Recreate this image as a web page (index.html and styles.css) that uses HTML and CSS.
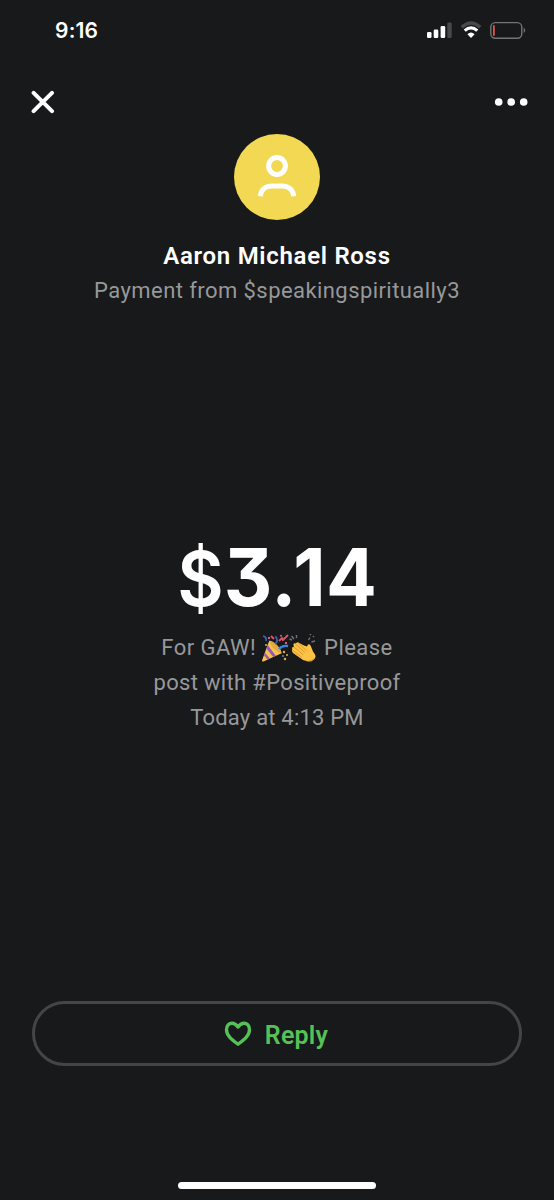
FILE: index.html
```html
<!DOCTYPE html>
<html lang="en">
<head>
<meta charset="utf-8">
<title>Payment</title>
<link rel="stylesheet" href="styles.css">
</head>
<body>
<main class="screen">
  <header class="status">
    <span class="clock">9:16</span>
    <svg class="indicators" width="100" height="20" viewBox="0 0 100 20">
      <g fill="#fff"><rect x="1" y="12" width="4.5" height="6" rx="1.3"/><rect x="7.7" y="9.5" width="4.6" height="8.5" rx="1.3"/><rect x="14.6" y="6" width="4.6" height="12" rx="1.3"/></g>
      <rect x="21.3" y="2.5" width="4.4" height="15.5" rx="1.3" fill="#48494a"/>
      <path d="M35.7 7.2Q45 -1.2 54.3 7.2" fill="none" stroke="#48494a" stroke-width="3.4"/>
      <path d="M38.7 10.6Q45 5 51.3 10.6" fill="none" stroke="#fff" stroke-width="3.2"/>
      <path d="M41.4 14.2Q45 11 48.6 14.2L45 17.9Z" fill="#fff"/>
      <rect x="64.8" y="2.6" width="31" height="15.6" rx="4.5" fill="none" stroke="#737475" stroke-width="1.4"/>
      <rect x="67" y="5" width="1.8" height="11" rx=".9" fill="#e9514b"/>
      <path d="M97.7 7.8Q99.2 8.5 99.2 10.4T97.7 13Z" fill="#737475"/>
    </svg>
  </header>
  <nav class="toolbar">
    <svg width="24" height="24" viewBox="0 0 24 24"><path d="M2.6 2.8 21 21.2M21 2.8 2.6 21.2" stroke="#fff" stroke-width="4" stroke-linecap="round"/></svg>
    <svg width="34" height="10" viewBox="0 0 34 10" fill="#fff"><circle cx="4.7" cy="5" r="3.8"/><circle cx="17.2" cy="5" r="3.8"/><circle cx="29.7" cy="5" r="3.8"/></svg>
  </nav>
  <section class="profile">
    <svg width="86" height="86" viewBox="0 0 86 86"><circle cx="43" cy="43" r="43" fill="#f2d853"/><g fill="none" stroke="#fff" stroke-width="5"><circle cx="43" cy="32" r="8.4"/><path d="M26.2 62.3C27 55 32 51.9 38 51.9H48C54 51.9 59 55 59.8 62.3"/></g></svg>
    <h1 class="name">Aaron Michael Ross</h1>
    <p class="source">Payment from $speakingspiritually3</p>
  </section>
  <section class="payment">
    <div class="amount"><span class="dollar">$</span>3<span class="point">.</span><span class="one">1</span>4</div>
    <p class="note line-one"><span>For GAW!</span>
      <svg class="emoji" width="56" height="28" viewBox="0 0 56 28">
        <path d="M1 26.5 8.2 6.8Q18 10.5 20.6 19.2L3 27.2Q1 28 1 26.5Z" fill="#f5c34f"/>
        <path d="M6.7 11 14.8 21.8 12.2 23 5.4 14.6ZM3.9 18.7 8.9 24.5 6.5 25.6 3 21.2Z" fill="#9b55b8"/>
        <path d="M8.2 6.8C12 6 20 13.5 20.6 19.2C16 18.5 9.5 13 8.2 6.8Z" fill="#e3aa40"/>
        <path d="M18 15Q21 11 27 12" fill="none" stroke="#3d86df" stroke-width="2.3"/>
        <path d="M14 10Q18 7 14.5 2.3M2 2Q6 3 5 7" fill="none" stroke="#3767bd" stroke-width="1.7"/>
        <path d="M10 2 13 5M18 7 21 4 22 6 25 3 27 1" fill="none" stroke="#df526a" stroke-width="1.8"/>
        <g fill="#e65d72"><rect x="7" y="3" width="2" height="2"/><rect x="24" y="8" width="2" height="2"/><circle cx="20" cy="1.7" r="1"/></g>
        <g fill="#ddb345"><circle cx="23" cy="18" r="1.2"/><circle cx="26" cy="21" r="1"/><circle cx="24" cy="25" r="1.2"/><circle cx="5" cy="11" r="1"/></g>
        <circle cx="22" cy="22" r=".9" fill="#708ee0"/>
        <path d="M31.2 15Q30.5 12.5 33 13L32.4 10.5Q32.8 8.5 34.6 9.5L36 8.6Q37 7.6 38.2 9L43 11.5 46 12.6 47 10.5Q49 9.8 50 12.5L52 17.5 54 20.5Q55.5 24 52.5 25.6Q48 28.5 42 26L32.7 19.6Q30.4 18 31.2 15Z" fill="#fcc345"/>
        <path d="M34.7 10.2 43.6 18.3M33 13.1 42 20.6M32 16.5 40.4 23M37.3 9.1 45 16.3" fill="none" stroke="#d99328" stroke-width=".9" stroke-linecap="round"/>
        <path d="M41.5 25.8Q49 28.5 54.2 23.2Q52 28.6 46.5 27.4Z" fill="#df9d2d"/>
        <path d="M30.5 2 33 5M35.5 1V4M31 6 28.5 5M47.5 6 49 3.5M50.5 8 54 7M48.8 1 50 0M52 3 53 2" fill="none" stroke="#6e747a" stroke-width="1.4"/>
      </svg>
      <span>Please</span></p>
    <p class="note line-two">post with #Positiveproof</p>
    <p class="note line-three">Today at 4:13 PM</p>
  </section>
  <button class="reply" type="button">
    <svg width="28" height="26" viewBox="0 0 28 26"><path d="M14 23.2C8.5 19 2.5 14.8 2.5 8.7C2.5 4.8 5 2.2 8.1 2.2C10.7 2.2 12.5 3.8 14 6C15.5 3.8 17.3 2.2 19.9 2.2C23 2.2 25.5 4.8 25.5 8.7C25.5 14.8 19.5 19 14 23.2Z" fill="none" stroke="#55c158" stroke-width="3.4" stroke-linejoin="round"/></svg>
    <span class="reply-label">Reply</span>
  </button>
  <div class="home"></div>
</main>
</body>
</html>
```
FILE: styles.css
```css
* { box-sizing: border-box; }
body { margin: 0; background: #18191b; }
svg { display: block; flex: none; }
.screen { width: 554px; height: 1200px; display: flex; flex-direction: column; align-items: center; overflow: hidden; background: #18191b; color: #fff; font-family: Roboto, "Liberation Sans", sans-serif; }
.status { width: 100%; height: 60px; padding: 20px 28px 0 55px; display: flex; justify-content: space-between; align-items: flex-start; }
.clock { font: 600 21px/21px Inter, sans-serif; letter-spacing: .2px; }
.toolbar { width: 100%; height: 74px; padding: 30px 26px 0 31px; display: flex; justify-content: space-between; align-items: flex-start; }
.toolbar svg:last-child { margin-top: 7px; }
.profile { height: 406px; display: flex; flex-direction: column; align-items: center; }
.name { margin: 19px 0 0; font-size: 24px; line-height: 34px; font-weight: 600; letter-spacing: .7px; white-space: nowrap; }
.source { margin: 0; font-size: 22px; line-height: 35px; color: #97989a; letter-spacing: .43px; white-space: nowrap; }
.payment { height: 461px; display: flex; flex-direction: column; align-items: center; }
.amount { height: 90px; font: 700 80px/74px Inter, sans-serif; letter-spacing: -1.2px; font-feature-settings: "cv09" 1; transform: scaleX(.94); }
.dollar { font-size: 76px; font-weight: 600; letter-spacing: 0; }
.point { letter-spacing: -3.5px; }
.one { letter-spacing: .5px; }
.note { margin: 0; height: 35px; display: flex; align-items: center; font-size: 22px; line-height: 35px; color: #97989a; white-space: nowrap; }
.line-one { letter-spacing: .45px; }
.line-two { letter-spacing: .33px; }
.line-three { letter-spacing: .2px; }
.emoji { margin: 0 7px 0 5px; }
.reply { width: 490px; height: 65px; padding: 0; display: flex; justify-content: center; align-items: center; gap: 13px; border: 3px solid #444546; border-radius: 33px; background: transparent; color: #55c158; font: 600 25px/30px Roboto, sans-serif; }
.reply svg { margin-left: -2px; }
.reply-label { margin-top: 4px; letter-spacing: .2px; }
.home { width: 198px; height: 7px; margin-top: 116px; border-radius: 4px; background: #fff; }
```
